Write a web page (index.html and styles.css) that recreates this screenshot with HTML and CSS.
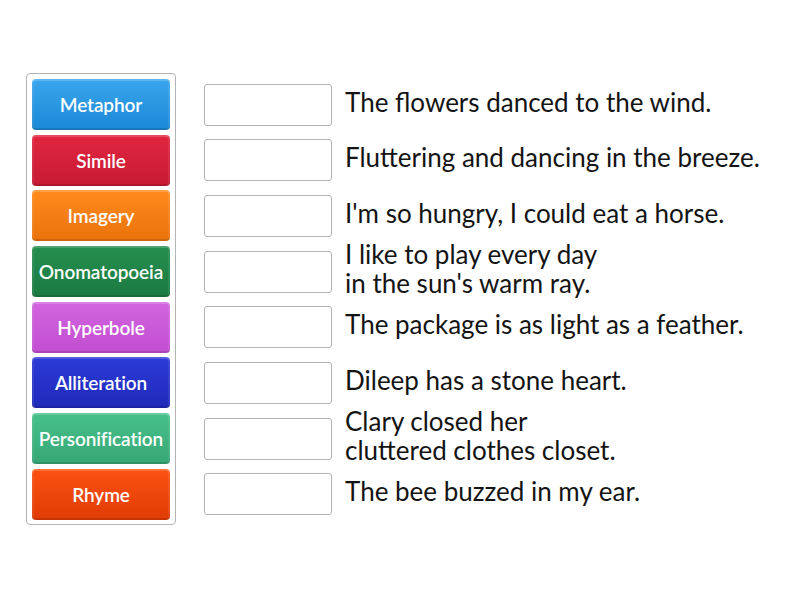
FILE: index.html
```html
<!DOCTYPE html>
<html>
<head>
<meta charset="utf-8">
<link rel="stylesheet" href="styles.css">
</head>
<body>
<div class="game">
  <div class="bank">
    <div class="tile t-blue">Metaphor</div>
    <div class="tile t-red">Simile</div>
    <div class="tile t-orange">Imagery</div>
    <div class="tile t-green">Onomatopoeia</div>
    <div class="tile t-violet">Hyperbole</div>
    <div class="tile t-navy">Alliteration</div>
    <div class="tile t-mint">Personification</div>
    <div class="tile t-vermilion">Rhyme</div>
  </div>
  <div class="rows">
    <div class="row"><div class="slot"></div><div class="clue">The flowers danced to the wind.</div></div>
    <div class="row"><div class="slot"></div><div class="clue">Fluttering and dancing in the breeze.</div></div>
    <div class="row"><div class="slot"></div><div class="clue">I'm so hungry, I could eat a horse.</div></div>
    <div class="row"><div class="slot"></div><div class="clue">I like to play every day<br>in the sun's warm ray.</div></div>
    <div class="row"><div class="slot"></div><div class="clue">The package is as light as a feather.</div></div>
    <div class="row"><div class="slot"></div><div class="clue">Dileep has a stone heart.</div></div>
    <div class="row"><div class="slot"></div><div class="clue">Clary closed her<br>cluttered clothes closet.</div></div>
    <div class="row"><div class="slot"></div><div class="clue">The bee buzzed in my ear.</div></div>
  </div>
</div>
</body>
</html>
```
FILE: styles.css
```css
html, body {
  margin: 0;
  padding: 0;
  background: #ffffff;
}
body {
  width: 800px;
  height: 600px;
  overflow: hidden;
  font-family: "Lato", "Noto Sans", sans-serif;
}
.game {
  display: flex;
  align-items: flex-start;
  padding: 73px 0 0 26px;
}
.bank {
  width: 138px;
  padding: 5px 5px 4px 5px;
  border: 1px solid #b4b4b4;
  border-radius: 4px;
  display: flex;
  flex-direction: column;
  gap: 4.7px;
}
.tile {
  height: 51px;
  border-radius: 4px;
  color: #ffffff;
  font-size: 19px;
  font-weight: 600;
  letter-spacing: -0.1px;
  display: flex;
  align-items: center;
  justify-content: center;
  white-space: nowrap;
  box-shadow: inset 0 2px 0 rgba(255,255,255,0.18), inset 2px 0 0 rgba(255,255,255,0.08), inset -2px 0 0 rgba(255,255,255,0.08), inset 0 -2px 0 rgba(0,0,0,0.12);
}
.t-blue { background: linear-gradient(#3aa6ee, #1b88d6); }
.t-red { background: linear-gradient(#e2263f, #c61a33); }
.t-orange { background: linear-gradient(#ff8b1c, #ea720b); }
.t-green { background: linear-gradient(#258f4f, #1c7a41); }
.t-violet { background: linear-gradient(#d266de, #c24dd1); }
.t-navy { background: linear-gradient(#2c3bd8, #1f29b9); }
.t-mint { background: linear-gradient(#47c18c, #36a775); }
.t-vermilion { background: linear-gradient(#fc5112, #e03c05); }
.rows {
  margin-left: 28px;
  padding-top: 6px;
  display: flex;
  flex-direction: column;
  gap: 4.7px;
}
.row {
  height: 51px;
  display: flex;
  align-items: center;
}
.slot {
  width: 126px;
  height: 40px;
  flex: none;
  border: 1px solid #b4b4b4;
  border-radius: 3px;
  background: #ffffff;
}
.clue {
  margin-left: 13px;
  margin-bottom: 5px;
  font-size: 26px;
  line-height: 29px;
  color: #141414;
  white-space: nowrap;
}
```
